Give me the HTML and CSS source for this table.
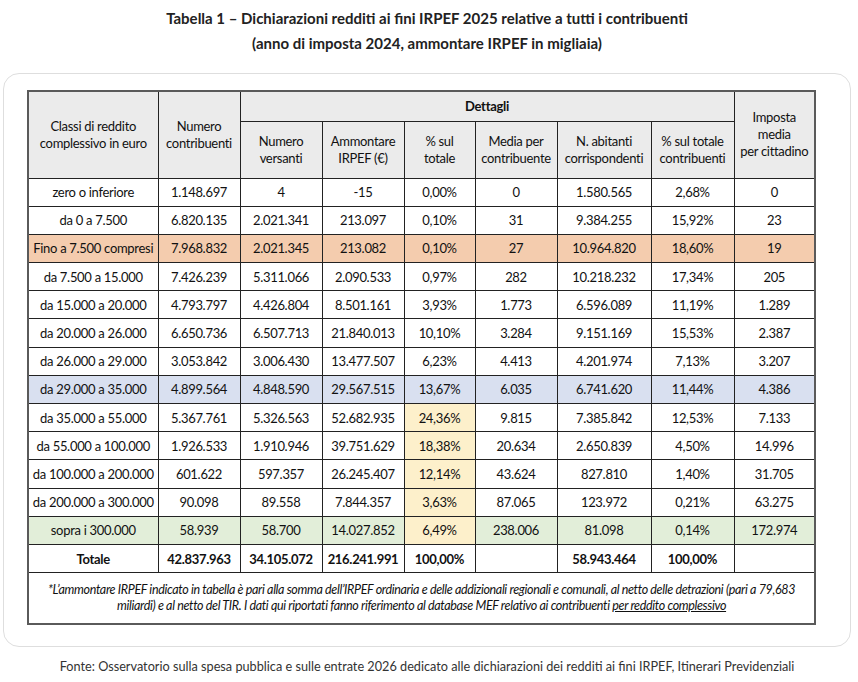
FILE: index.html
```html
<!DOCTYPE html>
<html lang="it">
<head>
    <meta charset="UTF-8">
    <meta name="viewport" content="width=device-width, initial-scale=1.0">
    <title>Tabella 1 - Dichiarazioni redditi IRPEF 2025</title>
    <link rel="stylesheet" href="styles.css">
</head>
<body>
<h3 class="title">Tabella 1 – Dichiarazioni redditi ai fini IRPEF 2025 relative a tutti i contribuenti<br>(anno di imposta 2024, ammontare IRPEF in migliaia)</h3>

<div class="card">
    <table class="irpef">
        <colgroup>
            <col style="width:130px">
            <col style="width:82px">
            <col style="width:82px">
            <col style="width:82px">
            <col style="width:71px">
            <col style="width:82px">
            <col style="width:94px">
            <col style="width:83px">
            <col style="width:81px">
        </colgroup>
        <tr class="head-top">
            <th rowspan="2">Classi di reddito<br>complessivo in euro</th>
            <th rowspan="2">Numero<br>contribuenti</th>
            <th colspan="6" class="bold">Dettagli</th>
            <th rowspan="2">Imposta<br>media<br>per cittadino</th>
        </tr>
        <tr class="head-sub">
            <th>Numero<br>versanti</th>
            <th>Ammontare<br>IRPEF (€)</th>
            <th>% sul<br>totale</th>
            <th>Media per<br>contribuente</th>
            <th>N. abitanti<br>corrispondenti</th>
            <th>% sul totale<br>contribuenti</th>
        </tr>
        <tr><td>zero o inferiore</td><td>1.148.697</td><td>4</td><td>-15</td><td>0,00%</td><td>0</td><td>1.580.565</td><td>2,68%</td><td>0</td></tr>
        <tr><td>da 0 a 7.500</td><td>6.820.135</td><td>2.021.341</td><td>213.097</td><td>0,10%</td><td>31</td><td>9.384.255</td><td>15,92%</td><td>23</td></tr>
        <tr class="orange"><td>Fino a 7.500 compresi</td><td>7.968.832</td><td>2.021.345</td><td>213.082</td><td>0,10%</td><td>27</td><td>10.964.820</td><td>18,60%</td><td>19</td></tr>
        <tr><td>da 7.500 a 15.000</td><td>7.426.239</td><td>5.311.066</td><td>2.090.533</td><td>0,97%</td><td>282</td><td>10.218.232</td><td>17,34%</td><td>205</td></tr>
        <tr><td>da 15.000 a 20.000</td><td>4.793.797</td><td>4.426.804</td><td>8.501.161</td><td>3,93%</td><td>1.773</td><td>6.596.089</td><td>11,19%</td><td>1.289</td></tr>
        <tr><td>da 20.000 a 26.000</td><td>6.650.736</td><td>6.507.713</td><td>21.840.013</td><td>10,10%</td><td>3.284</td><td>9.151.169</td><td>15,53%</td><td>2.387</td></tr>
        <tr><td>da 26.000 a 29.000</td><td>3.053.842</td><td>3.006.430</td><td>13.477.507</td><td>6,23%</td><td>4.413</td><td>4.201.974</td><td>7,13%</td><td>3.207</td></tr>
        <tr class="blue"><td>da 29.000 a 35.000</td><td>4.899.564</td><td>4.848.590</td><td>29.567.515</td><td>13,67%</td><td>6.035</td><td>6.741.620</td><td>11,44%</td><td>4.386</td></tr>
        <tr><td>da 35.000 a 55.000</td><td>5.367.761</td><td>5.326.563</td><td>52.682.935</td><td class="yellow">24,36%</td><td>9.815</td><td>7.385.842</td><td>12,53%</td><td>7.133</td></tr>
        <tr><td>da 55.000 a 100.000</td><td>1.926.533</td><td>1.910.946</td><td>39.751.629</td><td class="yellow">18,38%</td><td>20.634</td><td>2.650.839</td><td>4,50%</td><td>14.996</td></tr>
        <tr><td>da 100.000 a 200.000</td><td>601.622</td><td>597.357</td><td>26.245.407</td><td class="yellow">12,14%</td><td>43.624</td><td>827.810</td><td>1,40%</td><td>31.705</td></tr>
        <tr><td>da 200.000 a 300.000</td><td>90.098</td><td>89.558</td><td>7.844.357</td><td class="yellow">3,63%</td><td>87.065</td><td>123.972</td><td>0,21%</td><td>63.275</td></tr>
        <tr class="green"><td>sopra i 300.000</td><td>58.939</td><td>58.700</td><td>14.027.852</td><td class="yellow">6,49%</td><td>238.006</td><td>81.098</td><td>0,14%</td><td>172.974</td></tr>
        <tr class="total"><td>Totale</td><td>42.837.963</td><td>34.105.072</td><td>216.241.991</td><td>100,00%</td><td></td><td>58.943.464</td><td>100,00%</td><td></td></tr>
        <tr>
            <td colspan="9" class="note">*L’ammontare IRPEF indicato in tabella è pari alla somma dell’IRPEF ordinaria e delle addizionali regionali e comunali, al netto delle detrazioni (pari a 79,683 miliardi) e al netto del TIR. I dati qui riportati fanno riferimento al database MEF relativo ai contribuenti <u>per reddito complessivo</u></td>
        </tr>
    </table>
</div>

<p class="source">Fonte: Osservatorio sulla spesa pubblica e sulle entrate 2026 dedicato alle dichiarazioni dei redditi ai fini IRPEF, Itinerari Previdenziali</p>
</body>
</html>
```

FILE: styles.css
```css
body{
    margin: 0 7px 0 3px;
    background-color: white;
    font-family: Lato, "Liberation Sans", sans-serif;
    color: #222;
}
.title{
    margin: 6px 0 0 0;
    font-size: 15px;
    line-height: 25px;
    font-weight: bold;
    text-align: center;
    color: #222;
}
.card{
    margin-top: 17px;
    border: 1px solid #dedede;
    border-radius: 16px;
    padding: 16px 0 21px 23px;
}
.irpef{
    width: 787px;
    table-layout: fixed;
    border-collapse: collapse;
    border: 2px solid #5a5a5a;
    font-size: 13px;
    letter-spacing: -0.3px;
    color: #111;
}
.irpef th, .irpef td{
    border: 1px solid #222;
    text-align: center;
    padding: 0 2px;
    white-space: nowrap;
}
.irpef th{
    background-color: #ebebeb;
    font-weight: normal;
    line-height: 17px;
}
.irpef th.bold{
    font-weight: bold;
}
.head-top{
    height: 30px;
}
.head-sub{
    height: 57px;
}
.irpef td{
    height: 27.2px;
}
.orange td{
    background-color: #f4ccae;
}
.blue td{
    background-color: #d9e0f0;
}
.green td{
    background-color: #e2eed9;
}
.irpef td.yellow{
    background-color: #fdf0cb;
}
.total td{
    font-weight: bold;
}
.irpef td.note{
    height: 50px;
    white-space: normal;
    font-style: italic;
    font-size: 12.5px;
    letter-spacing: -0.35px;
    line-height: 16px;
    padding: 0 4px;
}
.source{
    margin: 11px 0 0 0;
    text-align: center;
    font-size: 12.7px;
    color: #333;
}
```
